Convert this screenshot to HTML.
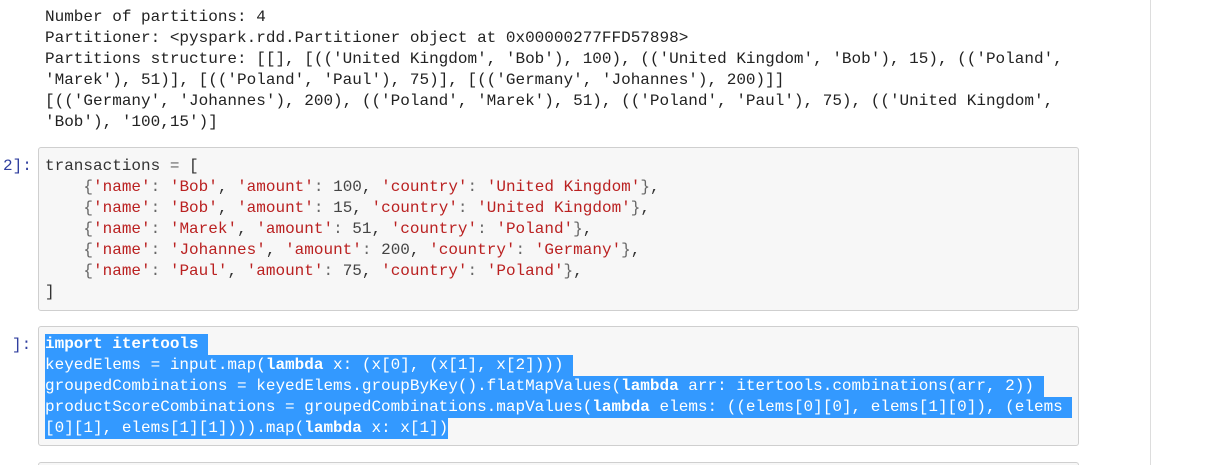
<!DOCTYPE html>
<html><head><meta charset="utf-8"><style>
html,body{margin:0;background:#fff;width:1212px;height:465px;overflow:hidden;}
body{position:relative;font-family:"Liberation Mono",monospace;font-size:16px;}
pre{margin:0;font-family:inherit;font-size:16px;line-height:21px;white-space:pre;}
.out{position:absolute;left:45px;top:7px;color:#222;}
.box{position:absolute;left:38px;width:1041px;background:#f7f7f7;border:1px solid #cfcfcf;border-radius:3px;box-sizing:border-box;}
.prompt{position:absolute;color:#303f9f;}
.s{color:#ba2121}.o{color:#666}.n{color:#444}
.sel{background:#3399ff;color:#fff;display:inline-block;height:21px}
.vl{position:absolute;left:1150px;top:0;width:1px;height:465px;background:#ddd}
</style></head><body>
<pre class="out">Number of partitions: 4
Partitioner: &lt;pyspark.rdd.Partitioner object at 0x00000277FFD57898&gt;
Partitions structure: [[], [(('United Kingdom', 'Bob'), 100), (('United Kingdom', 'Bob'), 15), (('Poland',
'Marek'), 51)], [(('Poland', 'Paul'), 75)], [(('Germany', 'Johannes'), 200)]]
[(('Germany', 'Johannes'), 200), (('Poland', 'Marek'), 51), (('Poland', 'Paul'), 75), (('United Kingdom',
'Bob'), '100,15')]</pre>
<pre class="prompt" style="left:3px;top:156px">2]:</pre>
<div class="box" style="top:147px;height:164px"></div>
<pre style="position:absolute;left:45px;top:156px;color:#333">transactions <span class="o">=</span> [
    <span class="o">{</span><span class="s">'name'</span><span class="o">:</span> <span class="s">'Bob'</span>, <span class="s">'amount'</span><span class="o">:</span> <span class="n">100</span>, <span class="s">'country'</span><span class="o">:</span> <span class="s">'United Kingdom'</span><span class="o">}</span>,
    <span class="o">{</span><span class="s">'name'</span><span class="o">:</span> <span class="s">'Bob'</span>, <span class="s">'amount'</span><span class="o">:</span> <span class="n">15</span>, <span class="s">'country'</span><span class="o">:</span> <span class="s">'United Kingdom'</span><span class="o">}</span>,
    <span class="o">{</span><span class="s">'name'</span><span class="o">:</span> <span class="s">'Marek'</span>, <span class="s">'amount'</span><span class="o">:</span> <span class="n">51</span>, <span class="s">'country'</span><span class="o">:</span> <span class="s">'Poland'</span><span class="o">}</span>,
    <span class="o">{</span><span class="s">'name'</span><span class="o">:</span> <span class="s">'Johannes'</span>, <span class="s">'amount'</span><span class="o">:</span> <span class="n">200</span>, <span class="s">'country'</span><span class="o">:</span> <span class="s">'Germany'</span><span class="o">}</span>,
    <span class="o">{</span><span class="s">'name'</span><span class="o">:</span> <span class="s">'Paul'</span>, <span class="s">'amount'</span><span class="o">:</span> <span class="n">75</span>, <span class="s">'country'</span><span class="o">:</span> <span class="s">'Poland'</span><span class="o">}</span>,
]</pre>
<pre class="prompt" style="left:12px;top:335px">]:</pre>
<div class="box" style="top:326px;height:120px"></div>
<pre style="position:absolute;left:45px;top:334px;color:#fff"><span class="sel"><b>import</b> <b>itertools</b> </span>
<span class="sel">keyedElems = input.map(<b>lambda</b> x: (x[0], (x[1], x[2]))) </span>
<span class="sel">groupedCombinations = keyedElems.groupByKey().flatMapValues(<b>lambda</b> arr: itertools.combinations(arr, 2)) </span>
<span class="sel">productScoreCombinations = groupedCombinations.mapValues(<b>lambda</b> elems: ((elems[0][0], elems[1][0]), (elems </span>
<span class="sel">[0][1], elems[1][1]))).map(<b>lambda</b> x: x[1])</span></pre>
<div class="box" style="top:462px;height:3px;border-bottom:none;border-radius:3px 3px 0 0"></div>
<div class="vl"></div>
</body></html>
